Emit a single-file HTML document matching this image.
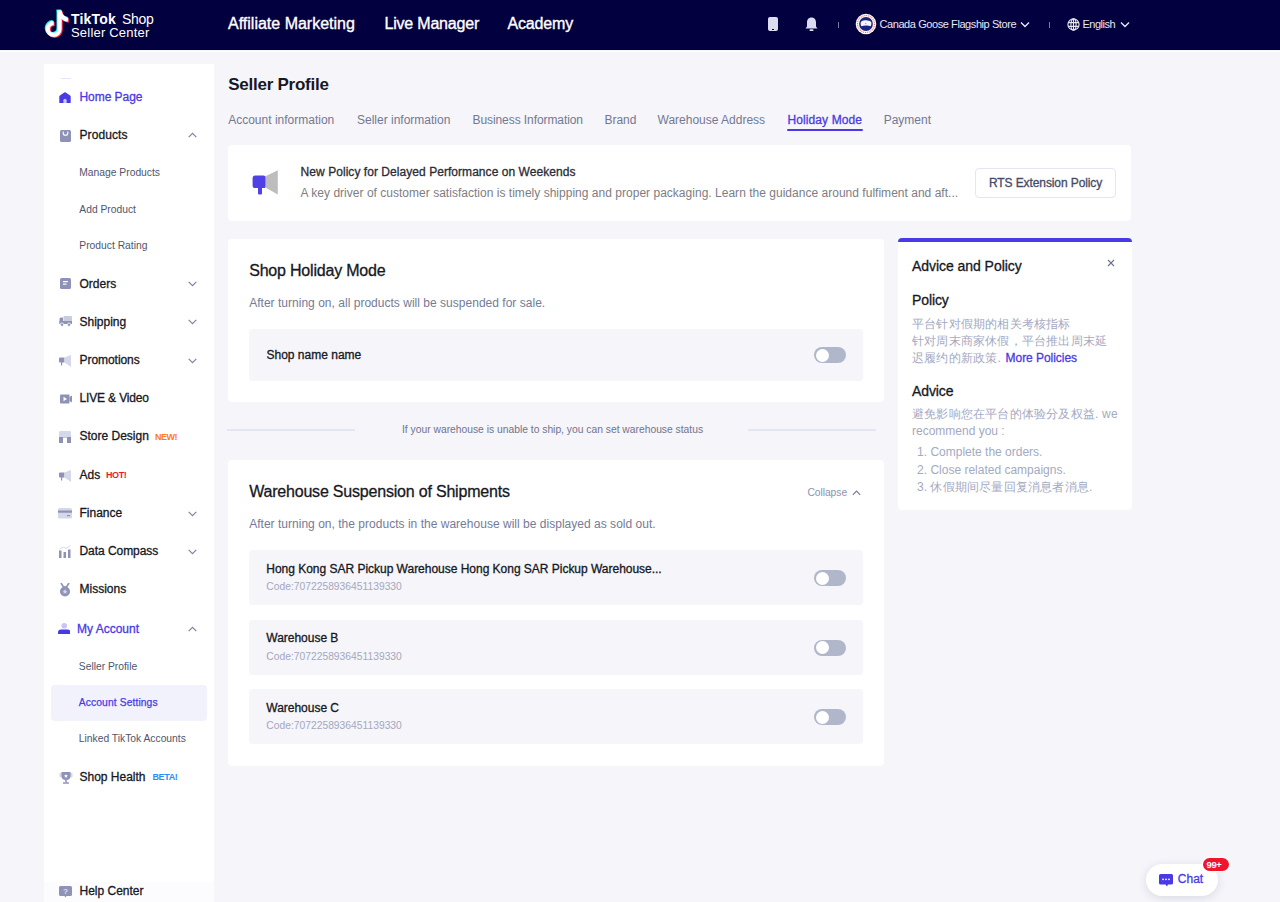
<!DOCTYPE html>
<html><head><meta charset="utf-8"><title>Seller Profile</title>
<style>
html,body{margin:0;padding:0;width:1280px;height:902px;overflow:hidden;background:#f5f5fa;font-family:"Liberation Sans",sans-serif;}
.t{position:absolute;white-space:nowrap;font-family:"Liberation Sans",sans-serif;}
.r{position:absolute;}
svg.r{display:block;}
</style></head><body>
<div class="r" style="left:0px;top:0px;width:1280px;height:50px;background:#03003f;"></div>
<div class="r" style="left:0px;top:50.5px;width:1280px;height:1.5px;background:#ffffff;"></div>
<svg class="r" style="left:40px;top:6px" width="32" height="36" viewBox="0 0 32 36">
<g fill="none" stroke-width="4.2" stroke-linecap="butt">
<path d="M19.6 4.5 V23 A5.9 5.9 0 1 1 13.7 17.1" stroke="#25f4ee" transform="translate(-1,-0.9)"/><path d="M19.6 4.8 Q20.5 12.5 28 13.8" stroke="#25f4ee" transform="translate(-1,-0.9)"/>
<path d="M19.6 4.5 V23 A5.9 5.9 0 1 1 13.7 17.1" stroke="#fe2c55" transform="translate(1,0.9)"/><path d="M19.6 4.8 Q20.5 12.5 28 13.8" stroke="#fe2c55" transform="translate(1,0.9)"/>
<path d="M19.6 4.5 V23 A5.9 5.9 0 1 1 13.7 17.1" stroke="#ffffff"/><path d="M19.6 4.8 Q20.5 12.5 28 13.8" stroke="#ffffff"/>
</g></svg>
<div class="t" style="left:71px;top:12.00px;font-size:14px;line-height:14px;color:#fff;letter-spacing:0.2px;"><b>TikTok</b></div>
<div class="t" style="left:122px;top:12.00px;font-size:14px;line-height:14px;color:#fff;letter-spacing:-0.3px;">Shop</div>
<div class="t" style="left:71px;top:26.00px;font-size:13px;line-height:13px;color:#fff;letter-spacing:0.2px;">Seller Center</div>
<div class="t" style="left:228px;top:16.00px;font-size:16px;line-height:16px;color:#fff;letter-spacing:0px;-webkit-text-stroke:0.35px #fff;">Affiliate Marketing</div>
<div class="t" style="left:384.5px;top:16.00px;font-size:16px;line-height:16px;color:#fff;letter-spacing:-0.2px;-webkit-text-stroke:0.35px #fff;">Live Manager</div>
<div class="t" style="left:507.5px;top:16.00px;font-size:16px;line-height:16px;color:#fff;letter-spacing:-0.15px;-webkit-text-stroke:0.35px #fff;">Academy</div>
<div class="r" style="left:768px;top:17px;width:10px;height:14px;background:#dcdcf0;border-radius:2px"></div>
<div class="r" style="left:772px;top:28.5px;width:2px;height:1.2px;background:#03003f;"></div>
<svg class="r" style="left:805px;top:17px" width="13" height="15" viewBox="0 0 13 15">
<path d="M6.5 0.5 C3.5 0.5 2 2.8 2 5.5 V9.5 L0.5 11.5 H12.5 L11 9.5 V5.5 C11 2.8 9.5 0.5 6.5 0.5Z" fill="#dcdcf0"/>
<rect x="4.5" y="12.3" width="4" height="1.8" rx="0.9" fill="#dcdcf0"/></svg>
<div class="r" style="left:837.5px;top:21.5px;width:1px;height:6px;background:#7a7a9a;"></div>
<svg class="r" style="left:854.6px;top:13.3px" width="22" height="22" viewBox="0 0 22 22">
<circle cx="11" cy="11" r="10.3" fill="#fdf8f6"/><circle cx="11" cy="11" r="8.5" fill="none" stroke="#d9654f" stroke-width="1.1" stroke-dasharray="1 0.9" opacity="0.85"/>
<circle cx="11" cy="11" r="6.9" fill="#1a2380"/>
<path d="M5.6 10 C6 8.2 7.5 7.3 9 7.6 C10 7 12.5 7 13.5 7.8 C15 7.6 16.2 8.6 16.4 10 C16.5 11.5 16 12.7 15.6 13.3 C13.5 12.4 9 12.4 6.2 13.2 C5.8 12.3 5.5 11 5.6 10Z" fill="#f4f4fa"/>
<circle cx="10.8" cy="10.6" r="0.6" fill="#d9654f"/></svg>
<div class="t" style="left:879.5px;top:19.00px;font-size:11px;line-height:11px;color:#e6e6f2;letter-spacing:-0.42px;">Canada Goose Flagship Store</div>
<svg class="r" style="left:1020px;top:21px" width="10" height="7" viewBox="0 0 10 7"><path d="M1 1.5 L5 5.5 L9 1.5" fill="none" stroke="#e6e6f2" stroke-width="1.4"/></svg>
<div class="r" style="left:1049px;top:21.5px;width:1px;height:6px;background:#7a7a9a;"></div>
<svg class="r" style="left:1067px;top:18px" width="13" height="13" viewBox="0 0 13 13" fill="none" stroke="#e6e6f2" stroke-width="1.1">
<circle cx="6.5" cy="6.5" r="5.6"/><ellipse cx="6.5" cy="6.5" rx="2.6" ry="5.6"/><path d="M1 4.6 H12 M1 8.4 H12 M6.5 0.9 V12.1"/></svg>
<div class="t" style="left:1082.5px;top:19.00px;font-size:11px;line-height:11px;color:#e6e6f2;letter-spacing:-0.5px;">English</div>
<svg class="r" style="left:1119.5px;top:21px" width="10" height="7" viewBox="0 0 10 7"><path d="M1 1.5 L5 5.5 L9 1.5" fill="none" stroke="#e6e6f2" stroke-width="1.4"/></svg>
<div class="r" style="left:44px;top:64px;width:170px;height:838px;background:#ffffff;"></div>
<div class="r" style="left:61px;top:77.5px;width:10px;height:1.5px;background:#e3e5f7;border-radius:1px"></div>
<svg class="r" style="left:59px;top:91.5px" width="12" height="11.5" viewBox="0 0 12 11.5"><path d="M0.3 4.5 Q0.3 3.8 0.9 3.4 L5.3 0.4 Q6 0 6.7 0.4 L11.1 3.4 Q11.7 3.8 11.7 4.5 V10.5 Q11.7 11.5 10.7 11.5 H1.3 Q0.3 11.5 0.3 10.5Z" fill="#4a3ae6"/><path d="M4.4 11.5 V8.3 a1.6 1.6 0 0 1 3.2 0 V11.5Z" fill="#c9c4f7"/></svg>
<div class="t" style="left:79.5px;top:91.00px;font-size:12px;line-height:12px;color:#4a3ae6;letter-spacing:-0.05px;-webkit-text-stroke:0.3px #4a3ae6;">Home Page</div>
<svg class="r" style="left:59.5px;top:129.5px" width="11" height="12" viewBox="0 0 11 12"><rect x="0" y="0" width="11" height="12" rx="1.5" fill="#8d92b6"/><path d="M3.2 1.5 V3 a2.3 2.3 0 0 0 4.6 0 V1.5" fill="none" stroke="#fff" stroke-width="1.1"/></svg>
<div class="t" style="left:79.5px;top:129.00px;font-size:12px;line-height:12px;color:#161823;letter-spacing:0.1px;-webkit-text-stroke:0.3px #161823;">Products</div>
<svg class="r" style="left:188px;top:132px" width="9" height="6" viewBox="0 0 9 6"><path d="M0.7 5.2 L4.5 1.4 L8.3 5.2" fill="none" stroke="#7d83a3" stroke-width="1.2"/></svg>
<div class="t" style="left:79.3px;top:168.00px;font-size:10.3px;line-height:10.3px;color:#50556c;letter-spacing:0px;">Manage Products</div>
<div class="t" style="left:79.3px;top:205.00px;font-size:10.3px;line-height:10.3px;color:#50556c;letter-spacing:0px;">Add Product</div>
<div class="t" style="left:79.3px;top:241.00px;font-size:10.3px;line-height:10.3px;color:#50556c;letter-spacing:0px;">Product Rating</div>
<svg class="r" style="left:59.5px;top:278px" width="11" height="11" viewBox="0 0 11 11"><rect width="11" height="11" rx="1.5" fill="#8d92b6"/><rect x="3" y="3" width="5" height="1.2" fill="#fff"/><rect x="3" y="5.5" width="3.5" height="1.2" fill="#fff"/></svg>
<div class="t" style="left:79.5px;top:278.00px;font-size:12px;line-height:12px;color:#161823;letter-spacing:0px;-webkit-text-stroke:0.3px #161823;">Orders</div>
<svg class="r" style="left:188px;top:281px" width="9" height="6" viewBox="0 0 9 6"><path d="M0.7 0.8 L4.5 4.6 L8.3 0.8" fill="none" stroke="#7d83a3" stroke-width="1.2"/></svg>
<svg class="r" style="left:58.5px;top:316px" width="13" height="11" viewBox="0 0 13 11"><path d="M0.5 3 Q0.5 1.5 2 1.5 H4 V8 H0.5Z" fill="#8d92b6"/><rect x="4.5" y="0" width="8.5" height="8" rx="1" fill="#c9ccdf"/><rect x="0.5" y="5" width="12.5" height="3" fill="#8d92b6"/><circle cx="3" cy="8.7" r="1.7" fill="#8d92b6" stroke="#fff" stroke-width="0.8"/><circle cx="10" cy="8.7" r="1.7" fill="#8d92b6" stroke="#fff" stroke-width="0.8"/></svg>
<div class="t" style="left:79.5px;top:316.00px;font-size:12px;line-height:12px;color:#161823;letter-spacing:0px;-webkit-text-stroke:0.3px #161823;">Shipping</div>
<svg class="r" style="left:188px;top:319px" width="9" height="6" viewBox="0 0 9 6"><path d="M0.7 0.8 L4.5 4.6 L8.3 0.8" fill="none" stroke="#7d83a3" stroke-width="1.2"/></svg>
<svg class="r" style="left:59px;top:354.5px" width="12" height="12" viewBox="0 0 12 12"><path d="M0 3.5 Q0 2.5 1 2.5 H5.5 V7.5 H3.2 V10.5 H2 V7.5 H1 Q0 7.5 0 6.5Z" fill="#8d92b6"/><path d="M5.5 2.5 L12 0 V12 L5.5 7.5Z" fill="#d5d8e8"/></svg>
<div class="t" style="left:79.5px;top:354.00px;font-size:12px;line-height:12px;color:#161823;letter-spacing:-0.05px;-webkit-text-stroke:0.3px #161823;">Promotions</div>
<svg class="r" style="left:188px;top:357.5px" width="9" height="6" viewBox="0 0 9 6"><path d="M0.7 0.8 L4.5 4.6 L8.3 0.8" fill="none" stroke="#7d83a3" stroke-width="1.2"/></svg>
<svg class="r" style="left:59.5px;top:393.5px" width="12" height="10" viewBox="0 0 12 10"><rect x="0" y="0.5" width="9.5" height="9" rx="1" fill="#8d92b6"/><path d="M9.5 3 L12 1.5 V8.5 L9.5 7Z" fill="#8d92b6"/><path d="M3.5 2.7 L7 5 L3.5 7.3Z" fill="#fff"/></svg>
<div class="t" style="left:79.5px;top:392.00px;font-size:12px;line-height:12px;color:#161823;letter-spacing:-0.15px;-webkit-text-stroke:0.3px #161823;">LIVE &amp; Video</div>
<svg class="r" style="left:59px;top:431px" width="12" height="12" viewBox="0 0 12 12"><rect width="12" height="5" rx="1.2" fill="#d5d8e8"/><rect y="4" width="12" height="8" fill="#8d92b6"/><rect x="4" y="6.5" width="4" height="5.5" fill="#fff"/><rect x="0" y="4" width="12" height="2" fill="#d5d8e8"/></svg>
<div class="t" style="left:79.5px;top:430.00px;font-size:12px;line-height:12px;color:#161823;letter-spacing:0px;-webkit-text-stroke:0.3px #161823;">Store Design</div>
<div class="t" style="left:155px;top:433.00px;font-size:9px;line-height:9px;color:#ff7b1c;letter-spacing:-0.5px;font-weight:700">NEW!</div>
<svg class="r" style="left:59px;top:469.5px" width="12" height="12" viewBox="0 0 12 12"><path d="M0 3.5 Q0 2.5 1 2.5 H5.5 V7.5 H3.2 V10.5 H2 V7.5 H1 Q0 7.5 0 6.5Z" fill="#8d92b6"/><path d="M5.5 2.5 L12 0 V12 L5.5 7.5Z" fill="#d5d8e8"/></svg>
<div class="t" style="left:79.5px;top:469.00px;font-size:12px;line-height:12px;color:#161823;letter-spacing:0px;-webkit-text-stroke:0.3px #161823;">Ads</div>
<div class="t" style="left:106px;top:471.00px;font-size:9px;line-height:9px;color:#f0162f;letter-spacing:-0.4px;font-weight:700">HOT!</div>
<svg class="r" style="left:58px;top:508px" width="14" height="11" viewBox="0 0 14 11"><rect width="14" height="10.5" rx="1.5" fill="#d5d8e8"/><rect y="2.5" width="14" height="2.2" fill="#8d92b6"/><rect x="9" y="7" width="3" height="1.2" fill="#8d92b6"/></svg>
<div class="t" style="left:79.5px;top:507.00px;font-size:12px;line-height:12px;color:#161823;letter-spacing:0px;-webkit-text-stroke:0.3px #161823;">Finance</div>
<svg class="r" style="left:188px;top:511px" width="9" height="6" viewBox="0 0 9 6"><path d="M0.7 0.8 L4.5 4.6 L8.3 0.8" fill="none" stroke="#7d83a3" stroke-width="1.2"/></svg>
<svg class="r" style="left:59px;top:545px" width="12" height="13" viewBox="0 0 12 13"><rect x="0" y="5.5" width="2.5" height="7.5" fill="#8d92b6"/><rect x="4.5" y="7" width="2.5" height="6" fill="#8d92b6"/><rect x="9" y="4.5" width="2.5" height="8.5" fill="#8d92b6"/><path d="M0.5 4 L4.5 2 L7 3.5 L11.5 0.5" fill="none" stroke="#d5d8e8" stroke-width="1"/></svg>
<div class="t" style="left:79.5px;top:545.00px;font-size:12px;line-height:12px;color:#161823;letter-spacing:-0.05px;-webkit-text-stroke:0.3px #161823;">Data Compass</div>
<svg class="r" style="left:188px;top:548.7px" width="9" height="6" viewBox="0 0 9 6"><path d="M0.7 0.8 L4.5 4.6 L8.3 0.8" fill="none" stroke="#7d83a3" stroke-width="1.2"/></svg>
<svg class="r" style="left:59px;top:583px" width="12" height="14" viewBox="0 0 12 14"><path d="M2 0 L4.5 4 H7.5 L10 0" fill="none" stroke="#8d92b6" stroke-width="1.6"/><circle cx="6" cy="8.5" r="5" fill="#8d92b6"/><path d="M6 6 L6.8 7.7 L8.5 7.9 L7.2 9 L7.6 10.8 L6 9.9 L4.4 10.8 L4.8 9 L3.5 7.9 L5.2 7.7Z" fill="#d5d8e8"/></svg>
<div class="t" style="left:79.5px;top:583.00px;font-size:12px;line-height:12px;color:#161823;letter-spacing:0px;-webkit-text-stroke:0.3px #161823;">Missions</div>
<svg class="r" style="left:57.5px;top:622.5px" width="12.5" height="11.5" viewBox="0 0 12.5 11.5"><circle cx="6.25" cy="2.8" r="2.8" fill="#c9c4f7"/><path d="M0 11.5 V9.5 Q0 6.5 3 6.5 H9.5 Q12.5 6.5 12.5 9.5 V11.5Z" fill="#4a3ae6"/></svg>
<div class="t" style="left:77px;top:623.00px;font-size:12px;line-height:12px;color:#4a3ae6;letter-spacing:0px;-webkit-text-stroke:0.3px #4a3ae6;">My Account</div>
<svg class="r" style="left:188px;top:625.5px" width="9" height="6" viewBox="0 0 9 6"><path d="M0.7 5.2 L4.5 1.4 L8.3 5.2" fill="none" stroke="#7d83a3" stroke-width="1.2"/></svg>
<div class="t" style="left:78.8px;top:662.00px;font-size:10.3px;line-height:10.3px;color:#50556c;letter-spacing:0px;">Seller Profile</div>
<div class="r" style="left:51px;top:685px;width:155.5px;height:36px;background:#f2f2fd;border-radius:4px"></div>
<div class="t" style="left:78.8px;top:698.00px;font-size:10.3px;line-height:10.3px;color:#4a3ae6;letter-spacing:0.1px;-webkit-text-stroke:0.25px #4a3ae6;">Account Settings</div>
<div class="t" style="left:78.8px;top:734.00px;font-size:10.3px;line-height:10.3px;color:#50556c;letter-spacing:0px;">Linked TikTok Accounts</div>
<svg class="r" style="left:58.5px;top:771.5px" width="14" height="12" viewBox="0 0 14 12"><path d="M0.5 1 H3 V4 Q3 5.5 1.5 5.5 Q0.5 5.5 0.5 4Z M13.5 1 H11 V4 Q11 5.5 12.5 5.5 Q13.5 5.5 13.5 4Z" fill="#d5d8e8"/><path d="M2.5 0 H11.5 V4 Q11.5 8 7 8 Q2.5 8 2.5 4Z" fill="#8d92b6"/><rect x="6.2" y="8" width="1.6" height="2.2" fill="#8d92b6"/><rect x="4" y="10.3" width="6" height="1.5" rx="0.5" fill="#8d92b6"/><path d="M7 2 L7.6 3.3 L9 3.4 L8 4.3 L8.3 5.7 L7 5 L5.7 5.7 L6 4.3 L5 3.4 L6.4 3.3Z" fill="#fff"/></svg>
<div class="t" style="left:79.5px;top:771.00px;font-size:12px;line-height:12px;color:#161823;letter-spacing:0px;-webkit-text-stroke:0.3px #161823;">Shop Health</div>
<div class="t" style="left:152.5px;top:773.00px;font-size:9px;line-height:9px;color:#2a8cff;letter-spacing:-0.4px;font-weight:700">BETA!</div>
<div class="r" style="left:44px;top:882px;width:170px;height:20px;background:#fcfcfe;"></div>
<svg class="r" style="left:58.5px;top:885.5px" width="13" height="12" viewBox="0 0 13 12"><path d="M1.5 0 H11.5 Q13 0 13 1.5 V8.5 Q13 10 11.5 10 H7.5 L6.5 11.5 L5.5 10 H1.5 Q0 10 0 8.5 V1.5 Q0 0 1.5 0Z" fill="#8d92b6"/><text x="6.5" y="8" font-size="8" text-anchor="middle" fill="#fff" font-family="Liberation Sans">?</text></svg>
<div class="t" style="left:79.5px;top:885.00px;font-size:12px;line-height:12px;color:#161823;letter-spacing:0px;-webkit-text-stroke:0.3px #161823;">Help Center</div>
<div class="t" style="left:228.2px;top:76.00px;font-size:17px;line-height:17px;color:#161823;letter-spacing:-0.25px;font-weight:700">Seller Profile</div>
<div class="t" style="left:228.2px;top:114.00px;font-size:12px;line-height:12px;color:#737993;letter-spacing:0px;">Account information</div>
<div class="t" style="left:357px;top:114.00px;font-size:12px;line-height:12px;color:#737993;letter-spacing:0px;">Seller information</div>
<div class="t" style="left:472.5px;top:114.00px;font-size:12px;line-height:12px;color:#737993;letter-spacing:-0.08px;">Business Information</div>
<div class="t" style="left:604.4px;top:114.00px;font-size:12px;line-height:12px;color:#737993;letter-spacing:0px;">Brand</div>
<div class="t" style="left:657.5px;top:114.00px;font-size:12px;line-height:12px;color:#737993;letter-spacing:0px;">Warehouse Address</div>
<div class="t" style="left:787.5px;top:114.00px;font-size:12px;line-height:12px;color:#4a3ae6;letter-spacing:0.1px;-webkit-text-stroke:0.3px #4a3ae6;">Holiday Mode</div>
<div class="r" style="left:787px;top:128.7px;width:76px;height:2px;background:#4a3ae6;border-radius:1px"></div>
<div class="t" style="left:883.7px;top:114.00px;font-size:12px;line-height:12px;color:#737993;letter-spacing:0px;">Payment</div>
<div class="r" style="left:227.5px;top:145px;width:903.5px;height:76px;background:#fff;border-radius:4px"></div>
<svg class="r" style="left:252px;top:170px" width="26" height="25" viewBox="0 0 26 25"><rect x="0.6" y="5.6" width="13.4" height="12.4" rx="2.6" fill="#5041e6"/><rect x="6" y="15" width="4" height="9.6" rx="1" fill="#5041e6"/><path d="M13.4 6.2 L25.8 0.2 V24.6 L13.4 17.6Z" fill="#bdbdbd"/></svg>
<div class="t" style="left:300.6px;top:166.00px;font-size:12px;line-height:12px;color:#2b2c36;letter-spacing:0.05px;-webkit-text-stroke:0.3px #2b2c36;">New Policy for Delayed Performance on Weekends</div>
<div class="t" style="left:300.6px;top:187.00px;font-size:12px;line-height:12px;color:#7d7d85;letter-spacing:0.02px;">A key driver of customer satisfaction is timely shipping and proper packaging. Learn the guidance around fulfiment and aft...</div>
<div class="r" style="left:975px;top:167.5px;width:141px;height:30.5px;background:#fff;border:1px solid #e3e6f3;border-radius:4px;box-sizing:border-box"></div>
<div class="t" style="left:989px;top:177.00px;font-size:12px;line-height:12px;color:#454b66;letter-spacing:-0.1px;-webkit-text-stroke:0.3px #454b66;">RTS Extension Policy</div>
<div class="r" style="left:228px;top:238.5px;width:656px;height:163.5px;background:#fff;border-radius:4px"></div>
<div class="t" style="left:249.2px;top:263.00px;font-size:16px;line-height:16px;color:#161823;letter-spacing:-0.2px;-webkit-text-stroke:0.3px #161823;">Shop Holiday Mode</div>
<div class="t" style="left:249.2px;top:297.00px;font-size:12px;line-height:12px;color:#757b96;letter-spacing:0.02px;">After turning on, all products will be suspended for sale.</div>
<div class="r" style="left:249px;top:329px;width:614px;height:52px;background:#f5f5fa;border-radius:4px"></div>
<div class="t" style="left:266.5px;top:349.00px;font-size:12px;line-height:12px;color:#161823;letter-spacing:0px;-webkit-text-stroke:0.3px #161823;">Shop name name</div>
<div class="r" style="left:814px;top:347px;width:32px;height:16px;background:#b1b7ca;border-radius:8px"></div>
<div class="r" style="left:815.5px;top:348.5px;width:13px;height:13px;background:#fff;border-radius:50%"></div>
<div class="r" style="left:227px;top:429.3px;width:128px;height:1.3px;background:#e3e6f2;"></div>
<div class="t" style="left:402px;top:425.00px;font-size:10.3px;line-height:10.3px;color:#6f748f;letter-spacing:0px;">If your warehouse is unable to ship, you can set warehouse status</div>
<div class="r" style="left:747.5px;top:429.3px;width:128.5px;height:1.3px;background:#e3e6f2;"></div>
<div class="r" style="left:228px;top:460px;width:656px;height:305.5px;background:#fff;border-radius:4px"></div>
<div class="t" style="left:249.2px;top:484.00px;font-size:16px;line-height:16px;color:#161823;letter-spacing:-0.2px;-webkit-text-stroke:0.3px #161823;">Warehouse Suspension of Shipments</div>
<div class="t" style="left:807.4px;top:488.00px;font-size:10.3px;line-height:10.3px;color:#8d92ab;letter-spacing:-0.05px;">Collapse</div>
<svg class="r" style="left:851.5px;top:489px" width="9" height="7" viewBox="0 0 9 7"><path d="M0.8 5.8 L4.5 2 L8.2 5.8" fill="none" stroke="#757a98" stroke-width="1.1"/></svg>
<div class="t" style="left:249.2px;top:518.00px;font-size:12px;line-height:12px;color:#757b96;letter-spacing:0.02px;">After turning on, the products in the warehouse will be displayed as sold out.</div>
<div class="r" style="left:249px;top:550.4px;width:614px;height:55px;background:#f5f5fa;border-radius:4px"></div>
<div class="t" style="left:266.3px;top:563.00px;font-size:12px;line-height:12px;color:#161823;letter-spacing:-0.02px;-webkit-text-stroke:0.3px #161823;">Hong Kong SAR Pickup Warehouse Hong Kong SAR Pickup Warehouse...</div>
<div class="t" style="left:266.3px;top:582.00px;font-size:10.3px;line-height:10.3px;color:#a3a8bf;letter-spacing:0px;">Code:7072258936451139330</div>
<div class="r" style="left:814px;top:570.1999999999999px;width:32px;height:16px;background:#b1b7ca;border-radius:8px"></div>
<div class="r" style="left:815.5px;top:571.6999999999999px;width:13px;height:13px;background:#fff;border-radius:50%"></div>
<div class="r" style="left:249px;top:619.8px;width:614px;height:55px;background:#f5f5fa;border-radius:4px"></div>
<div class="t" style="left:266.3px;top:632.00px;font-size:12px;line-height:12px;color:#161823;letter-spacing:-0.02px;-webkit-text-stroke:0.3px #161823;">Warehouse B</div>
<div class="t" style="left:266.3px;top:652.00px;font-size:10.3px;line-height:10.3px;color:#a3a8bf;letter-spacing:0px;">Code:7072258936451139330</div>
<div class="r" style="left:814px;top:639.5999999999999px;width:32px;height:16px;background:#b1b7ca;border-radius:8px"></div>
<div class="r" style="left:815.5px;top:641.0999999999999px;width:13px;height:13px;background:#fff;border-radius:50%"></div>
<div class="r" style="left:249px;top:689.2px;width:614px;height:55px;background:#f5f5fa;border-radius:4px"></div>
<div class="t" style="left:266.3px;top:702.00px;font-size:12px;line-height:12px;color:#161823;letter-spacing:-0.02px;-webkit-text-stroke:0.3px #161823;">Warehouse C</div>
<div class="t" style="left:266.3px;top:721.00px;font-size:10.3px;line-height:10.3px;color:#a3a8bf;letter-spacing:0px;">Code:7072258936451139330</div>
<div class="r" style="left:814px;top:709.0px;width:32px;height:16px;background:#b1b7ca;border-radius:8px"></div>
<div class="r" style="left:815.5px;top:710.5px;width:13px;height:13px;background:#fff;border-radius:50%"></div>
<div class="r" style="left:898px;top:238px;width:233.5px;height:271.5px;background:#fff;border-radius:4px"></div>
<div class="r" style="left:898px;top:238px;width:233.5px;height:4px;background:#4a3ae6;border-radius:4px 4px 0 0"></div>
<div class="t" style="left:912px;top:259.00px;font-size:14px;line-height:14px;color:#161823;letter-spacing:-0.05px;-webkit-text-stroke:0.3px #161823;">Advice and Policy</div>
<svg class="r" style="left:1106.5px;top:259px" width="8" height="8" viewBox="0 0 8 8"><path d="M1 1 L7 7 M7 1 L1 7" stroke="#6b718e" stroke-width="1.1"/></svg>
<div class="t" style="left:912px;top:293.00px;font-size:14px;line-height:14px;color:#161823;letter-spacing:-0.1px;-webkit-text-stroke:0.3px #161823;">Policy</div>
<div class="t" style="left:912px;top:318.00px;font-size:12px;line-height:12px;color:#a4a9c2;letter-spacing:0.2px;">平台针对假期的相关考核指标</div>
<div class="t" style="left:912px;top:335.00px;font-size:12px;line-height:12px;color:#a4a9c2;letter-spacing:0.2px;">针对周末商家休假，平台推出周末延</div>
<div class="t" style="left:912px;top:352.00px;font-size:12px;line-height:12px;color:#a4a9c2;letter-spacing:0.2px;">迟履约的新政策.</div>
<div class="t" style="left:1005.6px;top:352.00px;font-size:12px;line-height:12px;color:#4a3ae6;letter-spacing:-0.05px;-webkit-text-stroke:0.3px #4a3ae6;">More Policies</div>
<div class="t" style="left:912px;top:384.00px;font-size:14px;line-height:14px;color:#161823;letter-spacing:-0.1px;-webkit-text-stroke:0.3px #161823;">Advice</div>
<div class="t" style="left:912px;top:408.00px;font-size:12px;line-height:12px;color:#a4a9c2;letter-spacing:0.2px;">避免影响您在平台的体验分及权益. we</div>
<div class="t" style="left:912px;top:425.00px;font-size:12px;line-height:12px;color:#a4a9c2;letter-spacing:0px;">recommend you :</div>
<div class="t" style="left:917px;top:446.00px;font-size:12px;line-height:12px;color:#a4a9c2;letter-spacing:0px;">1.</div>
<div class="t" style="left:930.4px;top:446.00px;font-size:12px;line-height:12px;color:#a4a9c2;letter-spacing:0px;">Complete the orders.</div>
<div class="t" style="left:917px;top:464.00px;font-size:12px;line-height:12px;color:#a4a9c2;letter-spacing:0px;">2.</div>
<div class="t" style="left:930.4px;top:464.00px;font-size:12px;line-height:12px;color:#a4a9c2;letter-spacing:0px;">Close related campaigns.</div>
<div class="t" style="left:917px;top:481.00px;font-size:12px;line-height:12px;color:#a4a9c2;letter-spacing:0px;">3.</div>
<div class="t" style="left:930.4px;top:481.00px;font-size:12px;line-height:12px;color:#a4a9c2;letter-spacing:0.2px;">休假期间尽量回复消息者消息.</div>
<div class="r" style="left:1146px;top:864px;width:72px;height:31.5px;background:#fff;border-radius:16px;box-shadow:0 2px 10px rgba(30,30,80,0.13)"></div>
<svg class="r" style="left:1158.5px;top:873.5px" width="14" height="13" viewBox="0 0 14 13"><path d="M1.5 0 H12.5 Q14 0 14 1.5 V9 Q14 10.5 12.5 10.5 H9 L8 12.5 L6.5 10.5 H1.5 Q0 10.5 0 9 V1.5 Q0 0 1.5 0Z" fill="#4a3ae6"/><circle cx="4" cy="5.3" r="0.9" fill="#fff"/><circle cx="7" cy="5.3" r="0.9" fill="#fff"/><circle cx="10" cy="5.3" r="0.9" fill="#fff"/></svg>
<div class="t" style="left:1177.8px;top:873.00px;font-size:12px;line-height:12px;color:#4a3ae6;letter-spacing:0px;-webkit-text-stroke:0.3px #4a3ae6;">Chat</div>
<div class="r" style="left:1202.5px;top:857.5px;width:26px;height:13.5px;background:#f0142c;border-radius:7px;box-shadow:0 0 0 1px #fff"></div>
<div class="t" style="left:1206.5px;top:860.00px;font-size:9.5px;line-height:9.5px;color:#fff;letter-spacing:-0.4px;font-weight:700">99+</div>
</body></html>
